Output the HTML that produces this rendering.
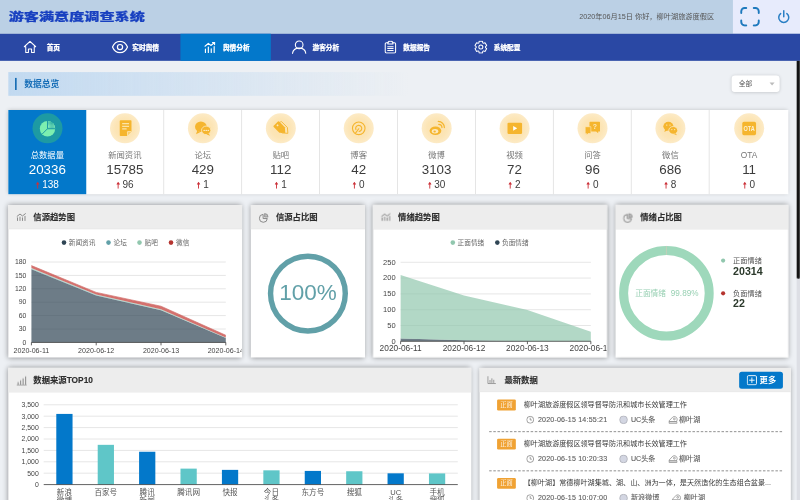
<!DOCTYPE html>
<html lang="zh-CN"><head><meta charset="utf-8"><title>游客满意度调查系统</title>
<style>
*{box-sizing:border-box}
html,body{margin:0;padding:0;width:800px;height:500px;overflow:hidden;background:#edf0f4}
#app{position:absolute;left:0;top:0;width:1920px;height:1200px;transform:scale(.4166667);transform-origin:0 0;
 font-family:"Liberation Sans","Noto Sans CJK SC",sans-serif;color:#333;overflow:hidden}
#wrap{position:absolute;left:0;top:0;width:800px;height:500px;overflow:hidden}
.title,.user,.nav .it span,.pn .hd b,.sec b,.sel,.more span{will-change:opacity}
.abs{position:absolute}
.header{position:absolute;left:0;top:0;width:1920px;height:81px;background:#bbd0e5}
.title{position:absolute;left:21px;top:21px;height:40px;line-height:40px;font-size:26px;font-weight:900;color:#1840c0;-webkit-text-stroke:.5px #1840c0;
 font-family:"Liberation Sans","Noto Sans CJK SC",sans-serif;white-space:nowrap;transform:scaleX(1.395);transform-origin:0 50%;letter-spacing:0}
.user{position:absolute;right:206px;top:20px;height:40px;line-height:40px;font-size:17.3px;color:#555;white-space:nowrap}
.hbtns{position:absolute;left:1759px;top:0;width:161px;height:81px;background:#e7ebfc}
.nav{position:absolute;left:0;top:81px;width:1920px;height:65px;background:#2a48a4}
.nav .it{position:absolute;top:0;height:65px;width:216.5px;color:#fff;font-weight:900;font-size:16px;line-height:65px;
 font-family:"Liberation Sans","Noto Sans CJK SC",sans-serif;-webkit-text-stroke:.45px #fff}
.nav .it.on{background:#0378cb}
.nav .it span{position:absolute;top:0;white-space:nowrap}
.nav .it svg{position:absolute}
.sec{position:absolute;left:20px;top:173px;width:960px;height:57px;background:linear-gradient(90deg,#c1d9f0 0%,rgba(193,217,240,0) 100%)}
.sec i{position:absolute;left:16px;top:14px;width:4px;height:29px;background:#1a6fb5}
.sec b{position:absolute;left:38px;top:0;line-height:57px;font-size:21px;color:#1a70b8;font-weight:bold}
.sel{position:absolute;left:1756px;top:181px;width:115px;height:40px;background:#fff;border-radius:8px;box-shadow:0 1px 8px rgba(0,0,0,.18);font-size:16px;line-height:40px;color:#555;padding-left:17px}
.sel:after{content:"";position:absolute;right:12px;top:17px;border:6px solid transparent;border-top:7px solid #bbb;border-bottom:0}
.stats{position:absolute;left:20px;top:264px;width:1872px;height:201.5px;background:#fff;box-shadow:0 0 10px rgba(0,0,0,.22)}
.st{position:absolute;top:0;height:201.5px;width:187.05px;border-right:2px solid #e0e0e0;text-align:center}
.st:last-child{border-right:0;width:188.5px}
.st.first{background:#0378ca;color:#fff;border-right:0}
.st .ic{position:absolute;left:50%;top:8px;margin-left:-36px;width:72px;height:72px;border-radius:50%;background:radial-gradient(circle,#fce2ad 0%,#fce5b6 45%,#fdf1d9 100%)}
.st.first .ic{background:#1d9aa3}
.st .lb{position:absolute;left:0;right:0;top:94.5px;line-height:28px;font-size:20px;color:#777}
.st.first .lb{color:#fff}
.st .nm{position:absolute;left:0;right:0;top:123.5px;line-height:38px;font-size:32px;color:#3c3c3c}
.st.first .nm{color:#fff}
.st .dl{position:absolute;left:0;right:0;top:165px;line-height:30px;font-size:24px;color:#3c3c3c}
.st.first .dl{color:#fff}
.st .dl svg{display:inline-block;vertical-align:-1px;margin-right:6.5px}
.pn{position:absolute;background:#fff;box-shadow:0 0 13px rgba(0,0,0,.42)}
.pn .hd{position:absolute;left:0;top:0;right:0;height:58px;background:#ededed;border-bottom:1px solid #e3e3e3}
.pn .hd b{position:absolute;left:60px;top:1px;line-height:58px;font-size:20px;font-weight:bold;color:#2e2e2e;white-space:nowrap;-webkit-text-stroke:.3px}
.pn .hd svg{position:absolute;left:18.5px;top:18.5px}
svg text{font-family:"Liberation Sans","Noto Sans CJK SC",sans-serif}
.ax text{stroke:#444;stroke-width:.4px}
.lg text{stroke:#666;stroke-width:.35px}
.more{position:absolute;left:1774px;top:892px;width:105px;height:41px;border-radius:6px;background:#0378ca;color:#fff;font-weight:bold;font-size:20px;line-height:41px}
.more span{position:absolute;left:49px;top:0}
.more svg{position:absolute;left:18px;top:8px}
.news{position:absolute;left:1151px;top:943px;width:741px;height:259px;overflow:hidden}
.ni{position:absolute;left:0;width:741px;height:94px}
.ni .bd{position:absolute;left:42px;top:16px;width:45px;height:26px;background:#f0a233;border-radius:3px;color:#fff;font-size:15px;line-height:26px;text-align:center;font-family:"Liberation Serif","Noto Serif CJK SC",serif}
.ni .tt{position:absolute;left:106px;top:14px;line-height:30px;font-size:17.05px;color:#3a3a3a;white-space:nowrap}
.ni .mt{position:absolute;top:50px;line-height:28px;font-size:17px;color:#5c5c5c;white-space:nowrap;-webkit-text-stroke:.25px}
.ni .ln{position:absolute;left:23px;right:15px;bottom:0;border-bottom:2px dashed #7a7a7a;height:0}
.ni svg{position:absolute}
.sbt{position:absolute;left:1912px;top:146px;width:8px;height:1054px;background:#dddfe5}
.sbh{position:absolute;left:1912px;top:146px;width:8px;height:523px;background:#141414;border-radius:0 0 4px 4px}
</style></head><body>
<div id="wrap"><div id="app">
<div class="header"><div class="title">游客满意度调查系统</div><div class="user">2020年06月15日 你好，柳叶湖旅游度假区</div><div class="hbtns"><svg class="abs" style="left:17px;top:16px" width="48" height="48" viewBox="0 0 48 48" fill="none" stroke="#1d79bd" stroke-width="4.6" stroke-linecap="round"><path d="M15 3H11a8 8 0 0 0-8 8v4M33 3h4a8 8 0 0 1 8 8v4M45 33v4a8 8 0 0 1-8 8h-4M3 33v4a8 8 0 0 0 8 8h4"/></svg><svg class="abs" style="left:106px;top:24px" width="32" height="34" viewBox="0 0 32 34" fill="none" stroke="#2a7fc4" stroke-width="3.6" stroke-linecap="round"><path d="M16 2v14"/><path d="M8.5 8.5a12 12 0 1 0 15 0"/></svg></div></div>
<div class="nav"><div class="it" style="left:0.0px"><svg style="left:55.8px;top:15.8px" width="32" height="32" viewBox="0 0 32 32" fill="none" stroke="#fff" stroke-width="2.5" stroke-linejoin="round" stroke-linecap="round"><path d="M2.2 15.2L16 2.2l13.8 13h-3.6v13.6h-6.4v-8.4h-7.6v8.4H5.8V15.2z"/></svg><span style="left:112.0px">首页</span></div><div class="it" style="left:216.5px"><svg style="left:51.3px;top:15.8px" width="40" height="32" viewBox="0 0 40 32" fill="none" stroke="#fff" stroke-width="2.9"><path d="M2 16C5.5 7.5 12 2.5 20 2.5S34.5 7.5 38 16c-3.5 8.5-10 13.5-18 13.5S5.5 24.5 2 16z"/><circle cx="20" cy="16" r="6.2"/></svg><span style="left:101.0px">实时舆情</span></div><div class="it on" style="left:433.0px"><svg style="left:57.2px;top:18.5px" width="28" height="28" viewBox="0 0 28 28" fill="none" stroke="#fff" stroke-width="2.8" stroke-linecap="round" stroke-linejoin="round"><path d="M3 26v-8M10 26V13M17 26v-9M24 26V12"/><path d="M2 11l8-7 6 5 9-7"/><path d="M20 2h5v5"/></svg><span style="left:102.0px">舆情分析</span></div><div class="it" style="left:649.5px"><svg style="left:50.8px;top:15.0px" width="36" height="34" viewBox="0 0 36 34" fill="none" stroke="#fff" stroke-width="2.6" stroke-linecap="round"><circle cx="18" cy="11.5" r="9.2"/><path d="M2 32c1-8 8-12.5 16-12.5s15 4.5 16 12.5"/></svg><span style="left:100.5px">游客分析</span></div><div class="it" style="left:866.0px"><svg style="left:56.0px;top:16.0px" width="30" height="32" viewBox="0 0 30 32" fill="none" stroke="#fff" stroke-width="2.6" stroke-linejoin="round" stroke-linecap="round"><path d="M9 5.5H5.5a3 3 0 0 0-3 3v18.5a3 3 0 0 0 3 3h19a3 3 0 0 0 3-3V8.5a3 3 0 0 0-3-3H21"/><path d="M9 8.5V5l3-3h6l3 3v3.5z"/><path d="M8.5 15h13M8.5 19.5h13M8.5 24h13"/></svg><span style="left:102.0px">数据报告</span></div><div class="it" style="left:1082.5px"><svg style="left:55.0px;top:16.0px" width="32" height="32" viewBox="0 0 32 32" fill="none" stroke="#fff" stroke-width="2.4" stroke-linejoin="round"><path d="M11.9 2.0 L20.1 2.0 L20.6 5.8 L22.6 6.9 L26.1 5.5 L30.2 12.5 L27.1 14.8 L27.1 17.2 L30.2 19.5 L26.1 26.5 L22.6 25.1 L20.6 26.2 L20.1 30.0 L11.9 30.0 L11.4 26.2 L9.4 25.1 L5.9 26.5 L1.8 19.5 L4.9 17.2 L4.9 14.8 L1.8 12.5 L5.9 5.5 L9.4 6.9 L11.4 5.8Z"/><circle cx="16" cy="16" r="4.8"/></svg><span style="left:102.5px">系统配置</span></div></div>
<div class="sec"><i></i><b>数据总览</b></div><div class="sel">全部</div>
<div class="stats"><div class="st first" style="left:0.0px"><div class="ic"><svg width="72" height="72" viewBox="0 0 74 74"><defs><pattern id="hx" width="4" height="4" patternUnits="userSpaceOnUse" patternTransform="rotate(45)"><rect width="4" height="4" fill="#27a89f"/><rect width="2" height="2" fill="#8af0bd"/><rect x="2" y="2" width="2" height="2" fill="#8af0bd"/></pattern></defs><circle cx="37" cy="38" r="19" fill="#7cefb0"/><path d="M37 38V19a19 19 0 0 1 19 19z" fill="url(#hx)"/><path d="M37 18v20h20M37 38L23.5 51.5" stroke="#1d9aa3" stroke-width="2.4" fill="none"/></svg></div><div class="lb">总数据量</div><div class="nm">20336</div><div class="dl"><svg width="9" height="17" viewBox="0 0 9 17"><path d="M4.5 0L9 6.5H5.6V17H3.4V6.5H0z" fill="#cc3038"/></svg>138</div></div><div class="st" style="left:187.1px"><div class="ic"><svg width="72" height="72" viewBox="0 0 74 74"><path d="M24 19a2 2 0 0 1 2-2h25a2 2 0 0 1 2 2v26L42 56H26a2 2 0 0 1-2-2z" fill="#f5b52e"/><path d="M53.5 44.5H44a2 2 0 0 0-2 2v10z" fill="#fde9be"/><path d="M52 46h-8.5v8.5z" fill="#f9cd6a"/><path d="M30 25.5h17M30 32h17M30 38.5h11" stroke="#fce4a8" stroke-width="3"/></svg></div><div class="lb">新闻资讯</div><div class="nm">15785</div><div class="dl"><svg width="9" height="17" viewBox="0 0 9 17"><path d="M4.5 0L9 6.5H5.6V17H3.4V6.5H0z" fill="#cc3038"/></svg>96</div></div><div class="st" style="left:374.1px"><div class="ic"><svg width="72" height="72" viewBox="0 0 74 74"><ellipse cx="32" cy="33" rx="14.5" ry="13" fill="#f5b52e"/><path d="M23 43l-3 8.5 10-5z" fill="#f5b52e"/><ellipse cx="45" cy="42" rx="11.5" ry="10.5" fill="#f5b52e" stroke="#fde9be" stroke-width="2"/><path d="M51 50l4 5-9-3z" fill="#f5b52e"/><circle cx="40" cy="42" r="1.7" fill="#fff"/><circle cx="45" cy="42" r="1.7" fill="#fff"/><circle cx="50" cy="42" r="1.7" fill="#fff"/></svg></div><div class="lb">论坛</div><div class="nm">429</div><div class="dl"><svg width="9" height="17" viewBox="0 0 9 17"><path d="M4.5 0L9 6.5H5.6V17H3.4V6.5H0z" fill="#cc3038"/></svg>1</div></div><div class="st" style="left:561.2px"><div class="ic"><svg width="72" height="72" viewBox="0 0 74 74"><g transform="rotate(45 37 37)"><path d="M24 28h20l11 9.5-11 9.5H24a2 2 0 0 1-2-2V30a2 2 0 0 1 2-2z" fill="none" stroke="#f5b52e" stroke-width="2" transform="translate(3,-4)"/><path d="M22 28h20l11 9.5-11 9.5H22a2 2 0 0 1-2-2V30a2 2 0 0 1 2-2z" fill="#f5b52e"/><circle cx="26" cy="37.5" r="2.3" fill="#fde9be"/></g></svg></div><div class="lb">贴吧</div><div class="nm">112</div><div class="dl"><svg width="9" height="17" viewBox="0 0 9 17"><path d="M4.5 0L9 6.5H5.6V17H3.4V6.5H0z" fill="#cc3038"/></svg>1</div></div><div class="st" style="left:748.2px"><div class="ic"><svg width="72" height="72" viewBox="0 0 74 74" fill="none" stroke="#f5b52e" stroke-linecap="round"><circle cx="37" cy="37" r="15.5" stroke-width="2.8"/><path d="M30 40a7.5 7.5 0 1 1 8 4.5" stroke-width="2.8"/><path d="M37 38l-8 11" stroke-width="2.8"/></svg></div><div class="lb">博客</div><div class="nm">42</div><div class="dl"><svg width="9" height="17" viewBox="0 0 9 17"><path d="M4.5 0L9 6.5H5.6V17H3.4V6.5H0z" fill="#cc3038"/></svg>0</div></div><div class="st" style="left:935.2px"><div class="ic"><svg width="72" height="72" viewBox="0 0 74 74"><ellipse cx="34" cy="43" rx="14.5" ry="10.5" fill="#f5b52e"/><ellipse cx="33" cy="44" rx="8" ry="5.5" fill="#fde9be"/><ellipse cx="32" cy="45" rx="3" ry="2.5" fill="#f5b52e"/><path d="M42 27a8 8 0 0 1 8 8M41 20a15 15 0 0 1 15 15" stroke="#f5b52e" stroke-width="3" fill="none" stroke-linecap="round"/></svg></div><div class="lb">微博</div><div class="nm">3103</div><div class="dl"><svg width="9" height="17" viewBox="0 0 9 17"><path d="M4.5 0L9 6.5H5.6V17H3.4V6.5H0z" fill="#cc3038"/></svg>30</div></div><div class="st" style="left:1122.3px"><div class="ic"><svg width="72" height="72" viewBox="0 0 74 74"><rect x="19.5" y="23" width="36" height="28" rx="3" fill="#f5b52e"/><path d="M33.5 31v12l10-6z" fill="#fff"/></svg></div><div class="lb">视频</div><div class="nm">72</div><div class="dl"><svg width="9" height="17" viewBox="0 0 9 17"><path d="M4.5 0L9 6.5H5.6V17H3.4V6.5H0z" fill="#cc3038"/></svg>2</div></div><div class="st" style="left:1309.4px"><div class="ic"><svg width="72" height="72" viewBox="0 0 74 74"><path d="M31 21h23a1.5 1.5 0 0 1 1.5 1.5v21a1.5 1.5 0 0 1-1.5 1.5h-3v4l-5-4H31a1.5 1.5 0 0 1-1.5-1.5v-21A1.5 1.5 0 0 1 31 21z" fill="#f5b52e"/><path d="M20 33h13v17H26l-4 4v-4h-2a1 1 0 0 1-1-1V34a1 1 0 0 1 1-1z" fill="#f5b52e" stroke="#fde9be" stroke-width="1.5"/><text x="43" y="39" font-size="17" font-weight="bold" fill="#fde9be" text-anchor="middle">?</text></svg></div><div class="lb">问答</div><div class="nm">96</div><div class="dl"><svg width="9" height="17" viewBox="0 0 9 17"><path d="M4.5 0L9 6.5H5.6V17H3.4V6.5H0z" fill="#cc3038"/></svg>0</div></div><div class="st" style="left:1496.4px"><div class="ic"><svg width="72" height="72" viewBox="0 0 74 74"><ellipse cx="32" cy="32" rx="12.5" ry="11" fill="#f5b52e"/><path d="M24 39l-2 7 8-4z" fill="#f5b52e"/><ellipse cx="44" cy="42" rx="11" ry="9.5" fill="#f5b52e" stroke="#fde9be" stroke-width="2"/><path d="M50 49l3 5-8-3z" fill="#f5b52e"/><circle cx="28" cy="29" r="1.7" fill="#fde9be"/><circle cx="36" cy="29" r="1.7" fill="#fde9be"/><circle cx="40.5" cy="40" r="1.5" fill="#fde9be"/><circle cx="47.5" cy="40" r="1.5" fill="#fde9be"/></svg></div><div class="lb">微信</div><div class="nm">686</div><div class="dl"><svg width="9" height="17" viewBox="0 0 9 17"><path d="M4.5 0L9 6.5H5.6V17H3.4V6.5H0z" fill="#cc3038"/></svg>8</div></div><div class="st" style="left:1683.5px"><div class="ic"><svg width="72" height="72" viewBox="0 0 74 74"><rect x="20" y="21" width="34" height="33" rx="4" fill="#f5b52e"/><g transform="translate(37,44) scale(.72,1)"><text x="0" y="0" font-size="19" font-weight="bold" fill="#fdf0d0" text-anchor="middle">OTA</text></g></svg></div><div class="lb">OTA</div><div class="nm">11</div><div class="dl"><svg width="9" height="17" viewBox="0 0 9 17"><path d="M4.5 0L9 6.5H5.6V17H3.4V6.5H0z" fill="#cc3038"/></svg>0</div></div></div>
<div class="pn" style="left:20.0px;top:492px;width:560.8px;height:366px"><div class="hd"><svg width="24" height="20" viewBox="0 0 24 22" preserveAspectRatio="none" fill="none" stroke="#777" stroke-width="2.1" stroke-linecap="round" stroke-linejoin="round"><path d="M3 20v-7M9 20v-9M15 20v-7M21 20V9"/><path d="M2 9l7-6 6 5 7-6"/></svg><b>信源趋势图</b></div><svg class="abs" style="left:0;top:0" width="560" height="366" viewBox="0 0 560 366"><text x="43.4" y="334.9" font-size="16.5" fill="#444" text-anchor="end">0</text><line x1="55.4" y1="297.6" x2="521.9" y2="297.6" stroke="#e4e4e4" stroke-width="2.2"/><text x="43.4" y="302.7" font-size="16.5" fill="#444" text-anchor="end">30</text><line x1="55.4" y1="265.4" x2="521.9" y2="265.4" stroke="#e4e4e4" stroke-width="2.2"/><text x="43.4" y="270.6" font-size="16.5" fill="#444" text-anchor="end">60</text><line x1="55.4" y1="233.3" x2="521.9" y2="233.3" stroke="#e4e4e4" stroke-width="2.2"/><text x="43.4" y="238.4" font-size="16.5" fill="#444" text-anchor="end">90</text><line x1="55.4" y1="201.1" x2="521.9" y2="201.1" stroke="#e4e4e4" stroke-width="2.2"/><text x="43.4" y="206.2" font-size="16.5" fill="#444" text-anchor="end">120</text><line x1="55.4" y1="169.0" x2="521.9" y2="169.0" stroke="#e4e4e4" stroke-width="2.2"/><text x="43.4" y="174.1" font-size="16.5" fill="#444" text-anchor="end">150</text><line x1="55.4" y1="136.8" x2="521.9" y2="136.8" stroke="#e4e4e4" stroke-width="2.2"/><text x="43.4" y="141.9" font-size="16.5" fill="#444" text-anchor="end">180</text><path d="M55.4 154.0 L210.9 217.2 L366.4 252.6 L521.9 319.0 L521.9 329.8 L366.4 329.8 L210.9 329.8 L55.4 329.8Z" fill="#2f4554" fill-opacity="0.7"/><path d="M55.4 152.9 L210.9 216.1 L366.4 251.7 L521.9 318.7 L521.9 319.0 L366.4 252.6 L210.9 217.2 L55.4 154.0Z" fill="#61a0a8" fill-opacity="0.7"/><path d="M55.4 151.3 L210.9 214.5 L366.4 250.4 L521.9 318.2 L521.9 318.7 L366.4 251.7 L210.9 216.1 L55.4 152.9Z" fill="#91c7ae" fill-opacity="0.7"/><path d="M55.4 145.4 L210.9 209.7 L366.4 242.9 L521.9 312.6 L521.9 318.2 L366.4 250.4 L210.9 214.5 L55.4 151.3Z" fill="#c23531" fill-opacity="0.7"/><path d="M55.4 145.4 L210.9 209.7 L366.4 242.9 L521.9 312.6" fill="none" stroke="#d26e6a" stroke-width="1.6" stroke-linejoin="round"/><line x1="55.4" y1="329.8" x2="521.9" y2="329.8" stroke="#444" stroke-width="2"/><line x1="55.4" y1="329.8" x2="55.4" y2="336.8" stroke="#444" stroke-width="2"/><text x="55.4" y="355.3" font-size="17" fill="#444" text-anchor="middle">2020-06-11</text><line x1="210.9" y1="329.8" x2="210.9" y2="336.8" stroke="#444" stroke-width="2"/><text x="210.9" y="355.3" font-size="17" fill="#444" text-anchor="middle">2020-06-12</text><line x1="366.4" y1="329.8" x2="366.4" y2="336.8" stroke="#444" stroke-width="2"/><text x="366.4" y="355.3" font-size="17" fill="#444" text-anchor="middle">2020-06-13</text><line x1="521.9" y1="329.8" x2="521.9" y2="336.8" stroke="#444" stroke-width="2"/><text x="521.9" y="355.3" font-size="17" fill="#444" text-anchor="middle">2020-06-14</text><circle cx="133.6" cy="90.2" r="5.5" fill="#2f4554"/><text x="145.1" y="95.7" font-size="16" fill="#666">新闻资讯</text><circle cx="240.4" cy="90.2" r="5.5" fill="#61a0a8"/><text x="252.6" y="95.7" font-size="16" fill="#666">论坛</text><circle cx="314.8" cy="90.2" r="5.5" fill="#91c7ae"/><text x="326.8" y="95.7" font-size="16" fill="#666">贴吧</text><circle cx="390.4" cy="90.2" r="5.5" fill="#b5342f"/><text x="402.4" y="95.7" font-size="16" fill="#666">微信</text></svg></div>
<div class="pn" style="left:602.2px;top:492px;width:274.3px;height:366px"><div class="hd"><svg width="24" height="24" viewBox="0 0 24 24" fill="none" stroke="#777" stroke-width="2"><path d="M10.5 3.5A9.5 9.5 0 1 0 20.5 13.5H10.5z" stroke-linejoin="round"/><path d="M14 1.5a8.5 8.5 0 0 1 8.5 8.5H14z" fill="#bbb" stroke-width="1.4" stroke-linejoin="round"/></svg><b>信源占比图</b></div><svg class="abs" style="left:0;top:0" width="274" height="366"><circle cx="137.0" cy="212.6" r="89.7" fill="none" stroke="#61a0a8" stroke-width="13"/><text x="137.0" y="228.6" font-size="54" fill="#61a0a8" text-anchor="middle">100%</text></svg></div>
<div class="pn" style="left:895.4px;top:492px;width:561.4px;height:366px"><div class="hd"><svg width="24" height="20" viewBox="0 0 24 22" preserveAspectRatio="none" fill="none" stroke="#777" stroke-width="2.1" stroke-linecap="round" stroke-linejoin="round"><path d="M3 20v-7M9 20v-9M15 20v-7M21 20V9"/><path d="M2 9l7-6 6 5 7-6"/></svg><b>情绪趋势图</b></div><svg class="abs" style="left:0;top:0" width="561" height="366" viewBox="0 0 561 366"><text x="54.5" y="332.7" font-size="18" fill="#444" text-anchor="end">0</text><line x1="66.5" y1="289.2" x2="523.0" y2="289.2" stroke="#e4e4e4" stroke-width="2.2"/><text x="54.5" y="294.8" font-size="18" fill="#444" text-anchor="end">50</text><line x1="66.5" y1="251.3" x2="523.0" y2="251.3" stroke="#e4e4e4" stroke-width="2.2"/><text x="54.5" y="256.9" font-size="18" fill="#444" text-anchor="end">100</text><line x1="66.5" y1="213.4" x2="523.0" y2="213.4" stroke="#e4e4e4" stroke-width="2.2"/><text x="54.5" y="218.9" font-size="18" fill="#444" text-anchor="end">150</text><line x1="66.5" y1="175.4" x2="523.0" y2="175.4" stroke="#e4e4e4" stroke-width="2.2"/><text x="54.5" y="181.0" font-size="18" fill="#444" text-anchor="end">200</text><line x1="66.5" y1="137.5" x2="523.0" y2="137.5" stroke="#e4e4e4" stroke-width="2.2"/><text x="54.5" y="143.1" font-size="18" fill="#444" text-anchor="end">250</text><path d="M66.5 320.3 L218.6 324.8 L370.8 326.7 L523.0 326.7 L523.0 327.1 L370.8 327.1 L218.6 327.1 L66.5 327.1Z" fill="#2f4554" fill-opacity="0.7"/><path d="M66.5 167.9 L218.6 217.2 L370.8 252.0 L523.0 304.4 L523.0 326.7 L370.8 326.7 L218.6 324.8 L66.5 320.3Z" fill="#91c7ae" fill-opacity="0.7"/><line x1="66.5" y1="327.1" x2="523.0" y2="327.1" stroke="#444" stroke-width="2"/><line x1="66.5" y1="327.1" x2="66.5" y2="334.1" stroke="#444" stroke-width="2"/><text x="66.5" y="351.1" font-size="20" fill="#444" text-anchor="middle">2020-06-11</text><line x1="218.6" y1="327.1" x2="218.6" y2="334.1" stroke="#444" stroke-width="2"/><text x="218.6" y="351.1" font-size="20" fill="#444" text-anchor="middle">2020-06-12</text><line x1="370.8" y1="327.1" x2="370.8" y2="334.1" stroke="#444" stroke-width="2"/><text x="370.8" y="351.1" font-size="20" fill="#444" text-anchor="middle">2020-06-13</text><line x1="523.0" y1="327.1" x2="523.0" y2="334.1" stroke="#444" stroke-width="2"/><text x="523.0" y="351.1" font-size="20" fill="#444" text-anchor="middle">2020-06-14</text><circle cx="191.8" cy="90.2" r="5.5" fill="#91c7ae"/><text x="203.3" y="95.7" font-size="16" fill="#666">正面情绪</text><circle cx="298.6" cy="90.2" r="5.5" fill="#2f4554"/><text x="309.8" y="95.7" font-size="16" fill="#666">负面情绪</text></svg></div>
<div class="pn" style="left:1476.7px;top:492px;width:415.3px;height:366px"><div class="hd"><svg width="24" height="24" viewBox="0 0 24 24" fill="none" stroke="#777" stroke-width="2"><path d="M10.5 3.5A9.5 9.5 0 1 0 20.5 13.5H10.5z" stroke-linejoin="round"/><path d="M14 1.5a8.5 8.5 0 0 1 8.5 8.5H14z" fill="#bbb" stroke-width="1.4" stroke-linejoin="round"/></svg><b>情绪占比图</b></div><svg class="abs" style="left:0;top:0" width="415" height="366"><circle cx="122.4" cy="211.7" r="102.7" fill="none" stroke="#9ed8bb" stroke-width="21.6"/><line x1="122.4" y1="98.2" x2="122.4" y2="119.8" stroke="#d9c9b9" stroke-width="1.5"/><text x="121.4" y="218.7" font-size="18.5" fill="#98d0b3" text-anchor="end">正面情绪</text><text x="132.9" y="218.7" font-size="19.6" fill="#98d0b3">99.89%</text><circle cx="258.5" cy="133.4" r="5" fill="#91c7ae"/><text x="282.5" y="139.4" font-size="17.3" fill="#555">正面情绪</text><text x="282.5" y="168.6" font-size="25.5" font-weight="bold" fill="#2c3a2c">20314</text><circle cx="258.5" cy="211.9" r="5" fill="#b5342f"/><text x="282.5" y="217.9" font-size="17.3" fill="#555">负面情绪</text><text x="282.5" y="245.4" font-size="25.5" font-weight="bold" fill="#2c3a2c">22</text></svg></div>
<div class="pn" style="left:20.0px;top:883px;width:1111.1px;height:330px"><div class="hd"><svg width="26" height="24" viewBox="0 0 26 24" fill="none" stroke="#8f8f8f" stroke-width="2.6"><path d="M1 22h24" stroke-width="1.8"/><path d="M4.5 21v-6M10.5 21V11M16.5 21V6M22.5 21V1"/></svg><b>数据来源TOP10</b></div><svg class="abs" style="left:0;top:0" width="1111" height="330"><text x="72.9" y="286.0" font-size="16.5" fill="#444" text-anchor="end">0</text><line x1="84.9" y1="252.7" x2="1078.7" y2="252.7" stroke="#e4e4e4" stroke-width="2.2"/><text x="72.9" y="258.7" font-size="16.5" fill="#444" text-anchor="end">500</text><line x1="84.9" y1="225.3" x2="1078.7" y2="225.3" stroke="#e4e4e4" stroke-width="2.2"/><text x="72.9" y="231.3" font-size="16.5" fill="#444" text-anchor="end">1,000</text><line x1="84.9" y1="198.0" x2="1078.7" y2="198.0" stroke="#e4e4e4" stroke-width="2.2"/><text x="72.9" y="204.0" font-size="16.5" fill="#444" text-anchor="end">1,500</text><line x1="84.9" y1="170.6" x2="1078.7" y2="170.6" stroke="#e4e4e4" stroke-width="2.2"/><text x="72.9" y="176.6" font-size="16.5" fill="#444" text-anchor="end">2,000</text><line x1="84.9" y1="143.2" x2="1078.7" y2="143.2" stroke="#e4e4e4" stroke-width="2.2"/><text x="72.9" y="149.2" font-size="16.5" fill="#444" text-anchor="end">2,500</text><line x1="84.9" y1="115.9" x2="1078.7" y2="115.9" stroke="#e4e4e4" stroke-width="2.2"/><text x="72.9" y="121.9" font-size="16.5" fill="#444" text-anchor="end">3,000</text><line x1="84.9" y1="88.5" x2="1078.7" y2="88.5" stroke="#e4e4e4" stroke-width="2.2"/><text x="72.9" y="94.5" font-size="16.5" fill="#444" text-anchor="end">3,500</text><rect x="115.1" y="110.4" width="39.0" height="169.6" fill="#0378ca"/><text x="134.6" y="305.0" font-size="18.2" fill="#555" text-anchor="middle">新浪</text><text x="134.6" y="323.5" font-size="18.2" fill="#555" text-anchor="middle">微博</text><rect x="214.5" y="184.6" width="39.0" height="95.5" fill="#5fc6c8"/><text x="234.0" y="305.0" font-size="18.2" fill="#555" text-anchor="middle">百家号</text><rect x="313.8" y="201.2" width="39.0" height="78.8" fill="#0378ca"/><text x="333.3" y="305.0" font-size="18.2" fill="#555" text-anchor="middle">腾讯</text><text x="333.3" y="323.5" font-size="18.2" fill="#555" text-anchor="middle">新闻</text><rect x="413.2" y="241.7" width="39.0" height="38.3" fill="#5fc6c8"/><text x="432.7" y="305.0" font-size="18.2" fill="#555" text-anchor="middle">腾讯网</text><rect x="512.6" y="244.7" width="39.0" height="35.3" fill="#0378ca"/><text x="532.1" y="305.0" font-size="18.2" fill="#555" text-anchor="middle">快报</text><rect x="612.0" y="245.8" width="39.0" height="34.2" fill="#5fc6c8"/><text x="631.5" y="305.0" font-size="18.2" fill="#555" text-anchor="middle">今日</text><text x="631.5" y="323.5" font-size="18.2" fill="#555" text-anchor="middle">头条</text><rect x="711.4" y="247.2" width="39.0" height="32.8" fill="#0378ca"/><text x="730.9" y="305.0" font-size="18.2" fill="#555" text-anchor="middle">东方号</text><rect x="810.8" y="248.0" width="39.0" height="32.0" fill="#5fc6c8"/><text x="830.3" y="305.0" font-size="18.2" fill="#555" text-anchor="middle">搜狐</text><rect x="910.1" y="253.0" width="39.0" height="27.1" fill="#0378ca"/><text x="929.6" y="305.0" font-size="18.2" fill="#555" text-anchor="middle">UC</text><text x="929.6" y="323.5" font-size="18.2" fill="#555" text-anchor="middle">头条</text><rect x="1009.5" y="253.2" width="39.0" height="26.8" fill="#5fc6c8"/><text x="1029.0" y="305.0" font-size="18.2" fill="#555" text-anchor="middle">手机</text><text x="1029.0" y="323.5" font-size="18.2" fill="#555" text-anchor="middle">搜狐</text><line x1="84.9" y1="280.0" x2="1078.7" y2="280.0" stroke="#444" stroke-width="2"/></svg></div>
<div class="pn" style="left:1150.6px;top:883px;width:747.4px;height:330px"><div class="hd"><svg width="22" height="21" viewBox="0 0 22 21" fill="none" stroke="#8a8a8a" stroke-width="2"><path d="M2 1v17.5h19"/><path d="M7 17v-7M11.5 17V6M16 17V9.5"/></svg><b>最新数据</b></div></div>
<div class="more"><svg width="25" height="25" viewBox="0 0 25 25" fill="none" stroke="#fff" stroke-width="2.2"><rect x="1.5" y="1.5" width="22" height="22" rx="3"/><path d="M12.5 6v13M6 12.5h13"/></svg><span>更多</span></div>
<div class="news"><div class="ni" style="top:0.0px"><div class="bd">正面</div><div class="tt">柳叶湖旅游度假区领导督导防汛和城市长效管理工作</div><svg style="left:112px;top:55px" width="19" height="19" viewBox="0 0 19 19" fill="none" stroke="#8a8a8a" stroke-width="2"><circle cx="9.5" cy="9.5" r="8.3"/><path d="M9.5 4.5v5.5h4"/></svg><div class="mt" style="left:140px;letter-spacing:.46px">2020-06-15 14:55:21</div><svg style="left:335px;top:54px" width="21" height="21" viewBox="0 0 21 21"><circle cx="10.5" cy="10.5" r="9.3" fill="#d3d6e2" stroke="#a4a6ae" stroke-width="1.6"/></svg><div class="mt" style="left:363.4px">UC头条</div><svg style="left:451.5px;top:54px" width="24" height="22" viewBox="0 0 24 22" fill="none" stroke="#8c8c8c" stroke-width="1.8" stroke-linejoin="round"><path d="M3 13L12 3.5a7 7 0 0 1 9.5 9.5l-1.5 2H3z"/><circle cx="15.5" cy="8.5" r="2.2"/><path d="M3 15h18.5v4H3z"/></svg><div class="mt" style="left:478.6px">柳叶湖</div><div class="ln"></div></div><div class="ni" style="top:94.2px"><div class="bd">正面</div><div class="tt">柳叶湖旅游度假区领导督导防汛和城市长效管理工作</div><svg style="left:112px;top:55px" width="19" height="19" viewBox="0 0 19 19" fill="none" stroke="#8a8a8a" stroke-width="2"><circle cx="9.5" cy="9.5" r="8.3"/><path d="M9.5 4.5v5.5h4"/></svg><div class="mt" style="left:140px;letter-spacing:.46px">2020-06-15 10:20:33</div><svg style="left:335px;top:54px" width="21" height="21" viewBox="0 0 21 21"><circle cx="10.5" cy="10.5" r="9.3" fill="#d3d6e2" stroke="#a4a6ae" stroke-width="1.6"/></svg><div class="mt" style="left:363.4px">UC头条</div><svg style="left:451.5px;top:54px" width="24" height="22" viewBox="0 0 24 22" fill="none" stroke="#8c8c8c" stroke-width="1.8" stroke-linejoin="round"><path d="M3 13L12 3.5a7 7 0 0 1 9.5 9.5l-1.5 2H3z"/><circle cx="15.5" cy="8.5" r="2.2"/><path d="M3 15h18.5v4H3z"/></svg><div class="mt" style="left:478.6px">柳叶湖</div><div class="ln"></div></div><div class="ni" style="top:188.4px"><div class="bd">正面</div><div class="tt">【柳叶湖】常德柳叶湖集城、湖、山、洲为一体，是天然造化的生态组合盆景...</div><svg style="left:112px;top:55px" width="19" height="19" viewBox="0 0 19 19" fill="none" stroke="#8a8a8a" stroke-width="2"><circle cx="9.5" cy="9.5" r="8.3"/><path d="M9.5 4.5v5.5h4"/></svg><div class="mt" style="left:140px;letter-spacing:.46px">2020-06-15 10:07:00</div><svg style="left:335px;top:54px" width="21" height="21" viewBox="0 0 21 21"><circle cx="10.5" cy="10.5" r="9.3" fill="#d3d6e2" stroke="#a4a6ae" stroke-width="1.6"/></svg><div class="mt" style="left:363.4px">新浪微博</div><svg style="left:460.4px;top:54px" width="24" height="22" viewBox="0 0 24 22" fill="none" stroke="#8c8c8c" stroke-width="1.8" stroke-linejoin="round"><path d="M3 13L12 3.5a7 7 0 0 1 9.5 9.5l-1.5 2H3z"/><circle cx="15.5" cy="8.5" r="2.2"/><path d="M3 15h18.5v4H3z"/></svg><div class="mt" style="left:490.0px">柳叶湖</div><div class="ln"></div></div></div>
<div class="sbt"></div><div class="sbh"></div>
</div></div></body></html>
